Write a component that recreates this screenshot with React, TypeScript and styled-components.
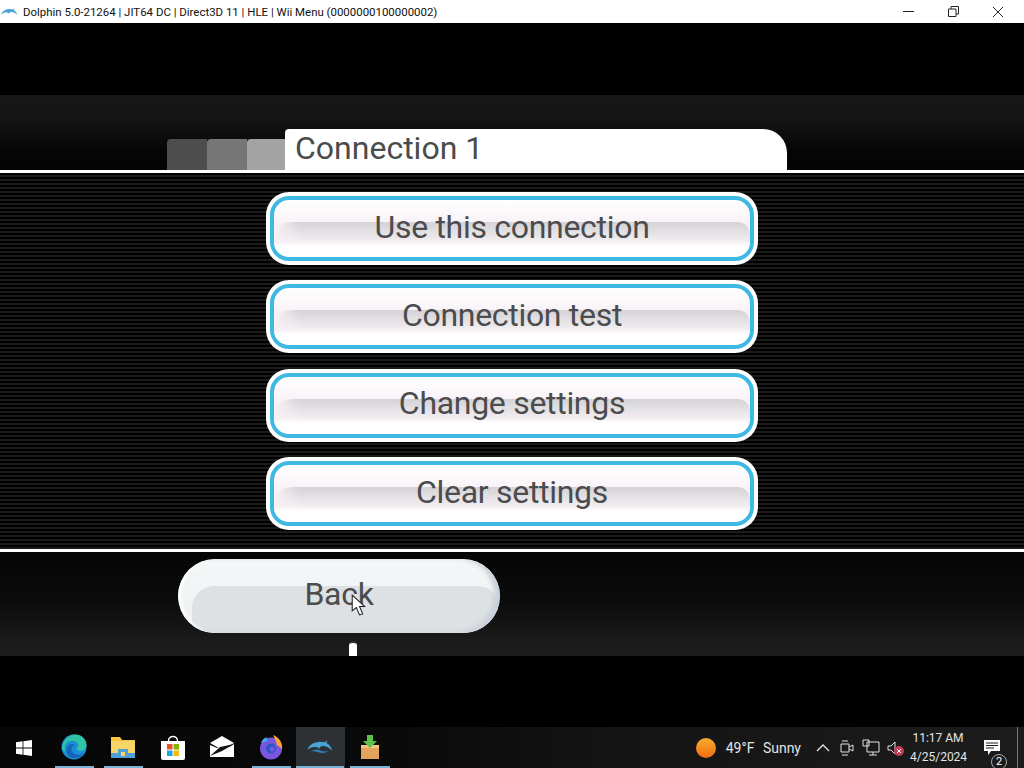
import React from "react";
import styled, { createGlobalStyle } from "styled-components";

const Global = createGlobalStyle`
  html, body { margin: 0; padding: 0; background: #000; }
  #root { width: 1024px; height: 768px; overflow: hidden; }
`;

const Screen = styled.div`
  position: relative;
  width: 1024px;
  height: 768px;
  display: flex;
  flex-direction: column;
  background: #000;
  overflow: hidden;
  font-family: Roboto, "Liberation Sans", sans-serif;
`;

/* window title bar */
const TitleBar = styled.div`
  height: 23px;
  flex-shrink: 0;
  box-sizing: border-box;
  padding-right: 3px;
  background: #fff;
  display: flex;
  align-items: center;
  color: #111;
  font-size: 11.45px;
  white-space: nowrap;
`;

const AppIcon = styled.svg`
  width: 17px;
  height: 12px;
  margin: 0 5px 0 1px;
`;

const TitleText = styled.span`
  flex: 1;
`;

const WinControl = styled.div`
  width: 46px;
  height: 23px;
  display: flex;
  align-items: center;
  justify-content: center;
  margin-left: -1px;
`;

/* game view */
const Game = styled.div`
  flex: 1;
  display: flex;
  flex-direction: column;
  padding-top: 72px;
`;

const Header = styled.div`
  height: 75px;
  flex-shrink: 0;
  box-sizing: border-box;
  padding: 34px 0 0 167px;
  display: flex;
  align-items: flex-end;
  background: linear-gradient(#171918 0%, #131413 35%, #060606 75%, #030303 100%);
`;

const Tab = styled.div<{ $shade: string; $width: number }>`
  width: ${({ $width }) => $width}px;
  height: 31px;
  background: ${({ $shade }) => $shade};
  border-radius: 4px 0 0 0;
`;

const ActiveTab = styled.div`
  width: 502px;
  height: 41px;
  box-sizing: border-box;
  padding: 0 0 2px 10px;
  background: #fff;
  border-radius: 4px 24px 0 0;
  color: #4a4b4b;
  font-size: 32px;
  line-height: 39px;
  white-space: nowrap;
`;

const Rule = styled.div`
  height: 3px;
  flex-shrink: 0;
  background: #fff;
`;

const Middle = styled.div`
  height: 376px;
  flex-shrink: 0;
  box-sizing: border-box;
  padding: 19px 0 0 266px;
  display: flex;
  flex-direction: column;
  gap: 15.4px;
  background: repeating-linear-gradient(#000 0 2px, #1a1b1a 2px 4px);
`;

const MenuButton = styled.div`
  width: 492px;
  height: 73px;
  flex-shrink: 0;
  box-sizing: border-box;
  padding: 4px;
  background: #fff;
  border-radius: 23px;
`;

const MenuFace = styled.div`
  position: relative;
  height: 100%;
  box-sizing: border-box;
  border: 4px solid #3fb9e4;
  border-radius: 19px;
  background: linear-gradient(#fff 0%, #f7f1f6 45%, #f7f1f6 100%);
  overflow: hidden;
  display: flex;
  align-items: center;
  justify-content: center;
`;

const MenuGloss = styled.div`
  position: absolute;
  left: 0;
  right: 0;
  top: 22px;
  height: 22px;
  border-radius: 18px 12px 0 0;
  background: linear-gradient(#d4d2d4 0%, #e4e1e4 45%, #f6f1f5 100%);
  mask-image: linear-gradient(90deg, transparent 0, #000 26px);
`;

const MenuBottom = styled.div`
  position: absolute;
  left: 0;
  right: 0;
  bottom: 0;
  height: 15px;
  background: linear-gradient(#f7f1f6, #fff 30%);
`;

const Label = styled.span`
  position: relative;
  color: #4b4c4d;
  font-size: 32px;
  letter-spacing: -0.3px;
  line-height: 40px;
  margin-top: -4px;
  white-space: nowrap;
`;

const Footer = styled.div`
  height: 104px;
  flex-shrink: 0;
  box-sizing: border-box;
  padding: 7px 0 0 178px;
  background: linear-gradient(#050505 0%, #0b0b0b 45%, #1a1a1a 85%, #1d1d1d 100%);
`;

const BackButton = styled.div`
  position: relative;
  width: 322px;
  height: 74px;
  border-radius: 37px;
  background: linear-gradient(#f4f7f7 0%, #eef1f1 100%);
  overflow: hidden;
  display: flex;
  align-items: center;
  justify-content: center;
`;

const BackGloss = styled.div`
  position: absolute;
  left: 14px;
  right: 0;
  top: 27px;
  bottom: 0;
  border-radius: 22px 22px 0 0;
  background: #dee1e3;
`;

const BackEdge = styled.div`
  position: absolute;
  inset: 0;
  border-radius: 37px;
  box-shadow: inset -6px -1px 5px #c8d0da, inset 3px 0 3px #fff;
`;

const Pointer = styled.svg`
  position: absolute;
  left: 351px;
  top: 594px;
  width: 15px;
  height: 22px;
`;

const Remote = styled.div`
  position: absolute;
  left: 349px;
  top: 641px;
  width: 8px;
  height: 15px;
  box-sizing: border-box;
  background: #fff;
  border-top: 2px solid #333;
  border-radius: 4px 4px 0 0;
`;

/* windows taskbar */
const Taskbar = styled.div`
  height: 41px;
  flex-shrink: 0;
  display: flex;
  background: linear-gradient(90deg, #060606 0%, #0a0a0a 40%, #141414 60%, #1c1c1c 100%);
  color: #e4e4e4;
`;

const Start = styled.div`
  width: 49.5px;
  display: flex;
  align-items: center;
  justify-content: center;
  padding-right: 2px;
  box-sizing: border-box;
`;

const Apps = styled.div`
  display: flex;
  flex: 1;
`;

const AppTile = styled.div<{ $open?: boolean; $active?: boolean }>`
  width: 49.3px;
  box-sizing: border-box;
  padding: ${({ $active }) => ($active ? "0 1px 0 0" : "0 5px")};
  display: flex;
  flex-direction: column;
  align-items: center;
  background: ${({ $active }) => ($active ? "#2e3133" : "transparent")};

  &::after {
    content: "";
    display: block;
    width: 100%;
    height: 2px;
    margin-top: auto;
    background: ${({ $open }) => ($open ? "#7bb2d8" : "transparent")};
  }
`;

const AppGlyph = styled.svg`
  width: 26px;
  height: 26px;
  margin-top: 7px;
`;

const Tray = styled.div`
  display: flex;
  align-items: center;
  font-size: 14px;
`;

const Weather = styled.span`
  margin: 0 13px 0 10px;
  white-space: nowrap;
  word-spacing: 5px;
`;

const TrayIcon = styled.svg`
  width: 18px;
  height: 18px;
  margin-right: 6px;
`;

const Clock = styled.div`
  width: 56px;
  text-align: center;
  font-size: 12px;
  line-height: 19px;
  white-space: nowrap;
`;

const Notice = styled.div`
  position: relative;
  width: 51px;
  display: flex;
  justify-content: center;
  align-items: center;
`;

const NoticeBadge = styled.span`
  position: absolute;
  left: 25px;
  top: 14px;
  width: 16px;
  height: 16px;
  box-sizing: border-box;
  border: 1px solid #aaa;
  border-radius: 50%;
  background: #1c1c1c;
  color: #fff;
  font-size: 11px;
  line-height: 14px;
  text-align: center;
`;

const ShowDesktop = styled.div`
  width: 1px;
  align-self: stretch;
  background: #777;
  margin-right: 6px;
`;

const dolphin = "M1 9C5 3 12 1 19 3l3-2-1 3c3 1 5 4 6 8-3-3-6-5-10-5-2 0-3 1-4 3-1-2-3-2-5-2-3 0-5 1-7 3z";

const entries = ["Use this connection", "Connection test", "Change settings", "Clear settings"];

const App = () => (
  <Screen>
    <Global />
    <TitleBar>
      <AppIcon viewBox="0 0 28 14">
        <path d={dolphin} fill="#4aa3d8" />
      </AppIcon>
      <TitleText>Dolphin 5.0-21264 | JIT64 DC | Direct3D 11 | HLE | Wii Menu (0000000100000002)</TitleText>
      <WinControl>
        <svg width="11" height="11" viewBox="0 0 11 11"><path d="M0 5.5h11" stroke="#222" /></svg>
      </WinControl>
      <WinControl>
        <svg width="11" height="11" viewBox="0 0 11 11" fill="none" stroke="#222">
          <path d="M.5 3h7.500v7.500H.5zM3 3V.5h7.500V8H8" />
        </svg>
      </WinControl>
      <WinControl>
        <svg width="12" height="12" viewBox="0 0 12 12"><path d="M1 1l10 10M11 1L1 11" stroke="#222" /></svg>
      </WinControl>
    </TitleBar>

    <Game>
      <Header>
        <Tab $shade="#4c4d4c" $width={40} />
        <Tab $shade="#767676" $width={40} />
        <Tab $shade="#a3a3a3" $width={38} />
        <ActiveTab>Connection 1</ActiveTab>
      </Header>
      <Rule />
      <Middle>
        {entries.map((entry) => (
          <MenuButton key={entry}>
            <MenuFace>
              <MenuGloss />
              <MenuBottom />
              <Label>{entry}</Label>
            </MenuFace>
          </MenuButton>
        ))}
      </Middle>
      <Rule />
      <Footer>
        <BackButton>
          <BackGloss />
          <BackEdge />
          <Label>Back</Label>
        </BackButton>
      </Footer>
    </Game>

    <Taskbar>
      <Start>
        <svg width="16" height="16" viewBox="0 0 16 16" fill="#fff">
          <path d="M0 2.300l6.600-1V7.500H0zM7.400 1.200L16 0v7.500H7.400zM0 8.400h6.600v6.300L0 13.700zM7.400 8.400H16V16l-8.600-1.200z" />
        </svg>
      </Start>
      <Apps>
        <AppTile $open>
          <AppGlyph viewBox="0 0 26 26">
            <circle cx="13" cy="13" r="12.500" fill="#1b8fd6" />
            <path d="M1 14C2 5 9 .5 14 .5c7 0 11.500 5 11.500 10.500 0 4-3 6-6 6-2 0-4-1-4-2.500 2-1 2.500-4 .5-6-3-3-9-2-11 1-2 2.500-2 5 0 8-3-1-4-2-4.500-3.500z" fill="#2fc4a8" />
            <path d="M9 23c-4-3-5-9-1-12 2-1.500 5-1 6 .5-4 0-5 5-1 8 3 2 8 1.500 10-1-2 5-9 7-14 4.500z" fill="#1565b8" />
          </AppGlyph>
        </AppTile>
        <AppTile $open>
          <AppGlyph viewBox="0 0 26 26">
            <path d="M1 3h9l2 3h13v8H1z" fill="#f5c63f" />
            <path d="M1 7h24v16H1z" fill="#f9d568" />
            <path d="M1 19h24v5H1z" fill="#4f9fd9" />
            <path d="M8 15h10v9H8z" fill="#4f9fd9" />
            <path d="M11 18h4v4h-4z" fill="#f9d568" />
          </AppGlyph>
        </AppTile>
        <AppTile>
          <AppGlyph viewBox="0 0 26 26">
            <path d="M1 7h24v17a2 2 0 0 1-2 2H3a2 2 0 0 1-2-2z" fill="#fff" />
            <path d="M8.500 7C8.500 1 17.500 1 17.500 7" fill="none" stroke="#fff" strokeWidth="1.500" />
            <path d="M7 10h5.500v5.500H7z" fill="#e8502a" />
            <path d="M13.500 10H19v5.500h-5.500z" fill="#7eb900" />
            <path d="M7 16.500h5.500V22H7z" fill="#18a4e8" />
            <path d="M13.500 16.500H19V22h-5.500z" fill="#fbb900" />
          </AppGlyph>
        </AppTile>
        <AppTile>
          <AppGlyph viewBox="0 0 26 26">
            <path d="M1 9l12-7 12 7-12 7z" fill="#fff" />
            <path d="M1 11v12h24V10l-5 3-12 1z" fill="#fff" />
            <path d="M1 22l10-9 14-3-12 7z" fill="#111" />
          </AppGlyph>
        </AppTile>
        <AppTile $open>
          <AppGlyph viewBox="0 0 26 26">
            <circle cx="13" cy="14.500" r="11" fill="#7b55e0" />
            <path d="M15 1c6 2 10 8 9 14l-5-4c-1-3-2-6-4-10z" fill="#f8a23a" />
            <path d="M3 9c1-3 3-5 6-6-1 2 0 3 1 4-3 0-5 1-7 2z" fill="#3ab4ee" />
            <circle cx="13" cy="14.500" r="5" fill="#2457c8" />
            <circle cx="14" cy="15" r="2.500" fill="#7b55e0" />
          </AppGlyph>
        </AppTile>
        <AppTile $open $active>
          <AppGlyph viewBox="0 0 28 26">
            <path d={dolphin} transform="translate(0 5)" fill="#4aa3d8" />
            <path d="M4 18c4-3 8-3 11-1 3 1 7 1 9-1-3 4-8 4-11 3-3-1-6-2-9-1z" fill="#2f7fb8" />
          </AppGlyph>
        </AppTile>
        <AppTile $open>
          <AppGlyph viewBox="0 0 26 26">
            <path d="M4 11h18v14H4z" fill="#e2a35a" />
            <path d="M4 11h18v3H4z" fill="#f1c583" />
            <path d="M10 1h6v6h4l-7 7-7-7h4z" fill="#5cc24a" />
          </AppGlyph>
        </AppTile>
      </Apps>
      <Tray>
        <svg width="20" height="20" viewBox="0 0 20 20">
          <defs>
            <linearGradient id="sun" x1="0" y1="0" x2="0" y2="1">
              <stop offset="0" stopColor="#f7ad2c" />
              <stop offset="1" stopColor="#f26b12" />
            </linearGradient>
          </defs>
          <circle cx="10" cy="10" r="10" fill="url(#sun)" />
        </svg>
        <Weather>49°F Sunny</Weather>
        <TrayIcon viewBox="0 0 18 18" fill="none" stroke="#e4e4e4">
          <path d="M3 12l6-6 6 6" strokeWidth="1.300" />
        </TrayIcon>
        <TrayIcon viewBox="0 0 18 18" fill="none" stroke="#e4e4e4">
          <path d="M3 5h8v8H3zM11 8l4-2v6l-4-2M4 2h6M4 16h6" />
        </TrayIcon>
        <TrayIcon viewBox="0 0 18 18" fill="none" stroke="#e4e4e4">
          <path d="M5 3h12v10H5zM1 1h6v6H1zM11 13v3M7 16h8" />
        </TrayIcon>
        <TrayIcon viewBox="0 0 18 18">
          <path d="M2 7h3l4-4v12l-4-4H2z" fill="none" stroke="#e4e4e4" />
          <circle cx="13" cy="12" r="5" fill="#c43c56" />
          <path d="M11 10l4 4M15 10l-4 4" stroke="#fff" />
        </TrayIcon>
        <Clock>
          11:17 AM
          <br />
          4/25/2024
        </Clock>
        <Notice>
          <svg width="16" height="15" viewBox="0 0 16 15">
            <path d="M0 0h16v11H7l-3 4v-4H0z" fill="#fff" />
            <path d="M2 3h12M2 5.500h12M2 8h8" stroke="#1c1c1c" />
          </svg>
          <NoticeBadge>2</NoticeBadge>
        </Notice>
        <ShowDesktop />
      </Tray>
    </Taskbar>

    <Remote />
    <Pointer viewBox="0 0 14 21">
      <path d="M1 1v15l4-3 3 7 3-1-3-7h5z" fill="#fff" stroke="#222" />
    </Pointer>
  </Screen>
);

export default App;
